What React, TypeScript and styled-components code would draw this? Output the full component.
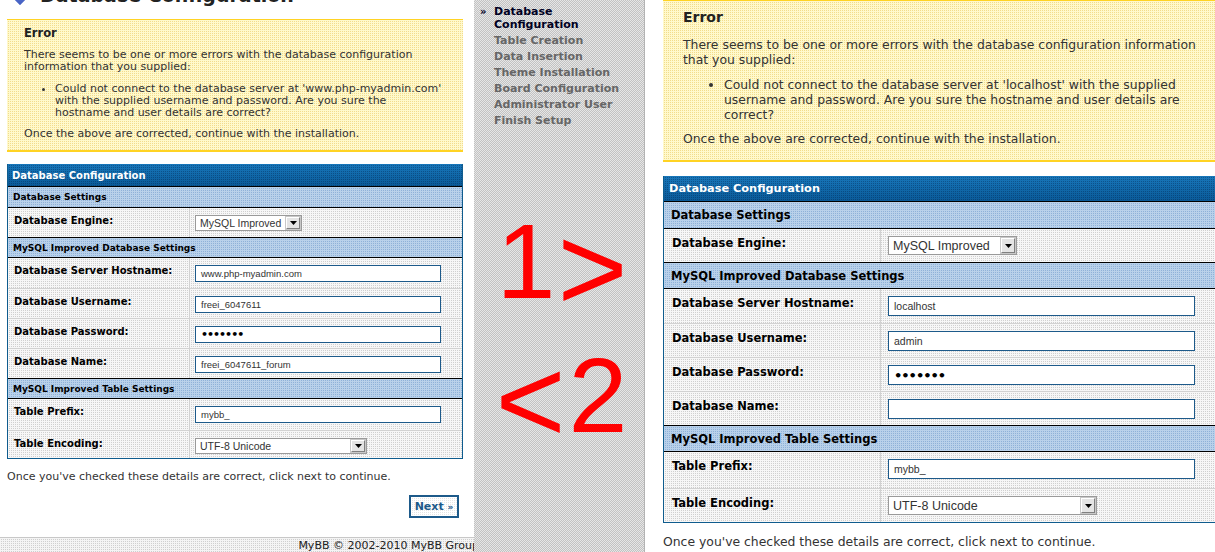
import React from "react";
import styled, { createGlobalStyle, css } from "styled-components";

// --- Sizes : the same installer page, shown at two zoom levels ---
interface Size {
  body: number;
  bodyLH: number;
  title: number;
  titleLH: number;
  errPad: string;
  errTop: number;
  paraGap: number;
  listGap: number;
  onceGap: number;
  indent: number;
  tableTop: number;
  head: number;
  headH: number;
  headPad: number;
  tcat: number;
  tcatH: number;
  tcatPad: number;
  label: number;
  labelLH: number;
  labelW: number;
  labelPadTop: number;
  labelPadLeft: number;
  fieldPadTop: number;
  fieldPadLeft: number;
  rowH: number;
  engineH: number;
  prefixH: number;
  encH: number;
  inputW: number;
  inputH: number;
  inputFont: number;
  dotFont: number;
  selFont: number;
  selH: number;
  engineW: number;
  encW: number;
  arrow: number;
  noteTop: number;
  noteLH: number;
}

const SMALL: Size = {
  body: 11,
  bodyLH: 12,
  title: 11.5,
  titleLH: 14,
  errPad: "6px 19px 10px 17px",
  errTop: 12,
  paraGap: 9,
  listGap: 10,
  onceGap: 9,
  indent: 31,
  tableTop: 12,
  head: 10,
  headH: 23,
  headPad: 4,
  tcat: 9,
  tcatH: 21,
  tcatPad: 5,
  label: 10,
  labelLH: 12,
  labelW: 182,
  labelPadTop: 7,
  labelPadLeft: 6,
  fieldPadTop: 7,
  fieldPadLeft: 5,
  rowH: 30,
  engineH: 29,
  prefixH: 31,
  encH: 28,
  inputW: 246,
  inputH: 17,
  inputFont: 9.5,
  dotFont: 11,
  selFont: 10.5,
  selH: 16,
  engineW: 107,
  encW: 172,
  arrow: 14,
  noteTop: 11,
  noteLH: 14,
};

const LARGE: Size = {
  body: 12.4,
  bodyLH: 15,
  title: 14,
  titleLH: 17,
  errPad: "8px 20px 14px 20px",
  errTop: 0,
  paraGap: 11,
  listGap: 10,
  onceGap: 9,
  indent: 41,
  tableTop: 14,
  head: 11.3,
  headH: 26,
  headPad: 5,
  tcat: 11.5,
  tcatH: 27,
  tcatPad: 7,
  label: 11.5,
  labelLH: 14,
  labelW: 217,
  labelPadTop: 7,
  labelPadLeft: 8,
  fieldPadTop: 7,
  fieldPadLeft: 7,
  rowH: 34,
  engineH: 33,
  prefixH: 36,
  encH: 34,
  inputW: 307,
  inputH: 20,
  inputFont: 10.5,
  dotFont: 13,
  selFont: 12.5,
  selH: 19,
  engineW: 129,
  encW: 209,
  arrow: 14,
  noteTop: 11,
  noteLH: 15,
};

const STEPS = [
  "Database Configuration",
  "Table Creation",
  "Data Insertion",
  "Theme Installation",
  "Board Configuration",
  "Administrator User",
  "Finish Setup",
];

// the old GIF dithering : one darker pixel in every 2x2 cell
const dots = (base: string, dot: string) => css`
  background-color: ${base};
  background-image: conic-gradient(from 90deg at 1px 1px, ${dot} 25%, transparent 0);
  background-size: 2px 2px;
`;

const GlobalStyle = createGlobalStyle`
  html, body { margin: 0; padding: 0; background: #fff; }
  body {
    width: 1215px;
    height: 552px;
    overflow: hidden;
    font-family: "DejaVu Sans", Verdana, sans-serif;
  }
  * { box-sizing: border-box; }
`;

const Arrow = () => (
  <svg width="7" height="4" viewBox="0 0 7 4">
    <path d="M0 0h7L3.5 4z" fill="#000" />
  </svg>
);

interface FormProps {
  s: Size;
  host: string;
  user: string;
  dbName: string;
}

function InstallForm({ s, host, user, dbName }: FormProps) {
  return (
    <>
      <ErrorBox $s={s}>
        <ErrTitle $s={s}>Error</ErrTitle>
        <ErrText $gap={s.paraGap}>
          There seems to be one or more errors with the database configuration information
          that you supplied:
        </ErrText>
        <ErrList $s={s}>
          <li>
            Could not connect to the database server at '{host}' with the supplied username
            and password. Are you sure the hostname and user details are correct?
          </li>
        </ErrList>
        <ErrText $gap={s.onceGap}>Once the above are corrected, continue with the installation.</ErrText>
      </ErrorBox>

      <Table $s={s}>
        <Head $s={s}>Database Configuration</Head>
        <Tcat $s={s}>Database Settings</Tcat>
        <Row $s={s} $h={s.engineH}>
          <Label $s={s}>Database Engine:</Label>
          <Field $s={s}>
            <SelectBox $s={s} $w={s.engineW}>
              MySQL Improved
              <SelectArrow $s={s}>
                <Arrow />
              </SelectArrow>
            </SelectBox>
          </Field>
        </Row>
        <Tcat $s={s}>MySQL Improved Database Settings</Tcat>
        <Row $s={s} $h={s.rowH}>
          <Label $s={s}>Database Server Hostname:</Label>
          <Field $s={s}>
            <TextBox $s={s}>{host}</TextBox>
          </Field>
        </Row>
        <Row $s={s} $h={s.rowH}>
          <Label $s={s}>Database Username:</Label>
          <Field $s={s}>
            <TextBox $s={s}>{user}</TextBox>
          </Field>
        </Row>
        <Row $s={s} $h={s.rowH}>
          <Label $s={s}>Database Password:</Label>
          <Field $s={s}>
            <TextBox $s={s}>
              <Secret $s={s}>•••••••</Secret>
            </TextBox>
          </Field>
        </Row>
        <Row $s={s} $h={s.rowH}>
          <Label $s={s}>Database Name:</Label>
          <Field $s={s}>
            <TextBox $s={s}>{dbName}</TextBox>
          </Field>
        </Row>
        <Tcat $s={s}>MySQL Improved Table Settings</Tcat>
        <Row $s={s} $h={s.prefixH}>
          <Label $s={s}>Table Prefix:</Label>
          <Field $s={s}>
            <TextBox $s={s}>mybb_</TextBox>
          </Field>
        </Row>
        <Row $s={s} $h={s.encH}>
          <Label $s={s}>Table Encoding:</Label>
          <Field $s={s}>
            <SelectBox $s={s} $w={s.encW}>
              UTF-8 Unicode
              <SelectArrow $s={s}>
                <Arrow />
              </SelectArrow>
            </SelectBox>
          </Field>
        </Row>
      </Table>

      <Hint $s={s}>Once you've checked these details are correct, click next to continue.</Hint>
    </>
  );
}

export default function App() {
  return (
    <Page>
      <GlobalStyle />

      {/* 1. Capture de gauche, petite */}
      <LeftPane>
        <LeftContent>
          <PageTitle>
            <svg width="16" height="16" viewBox="0 0 16 16">
              <defs>
                <linearGradient id="gem" x1="0" y1="0" x2="0" y2="1">
                  <stop offset="0" stopColor="#8fb0f0" />
                  <stop offset="1" stopColor="#3553b8" />
                </linearGradient>
              </defs>
              <path d="M8 0L16 8L8 16L0 8z" fill="url(#gem)" />
              <path d="M0 8L16 8L8 16z" fill="#4a64c8" opacity="0.7" />
            </svg>
            Database Configuration
          </PageTitle>
          <InstallForm
            s={SMALL}
            host="www.php-myadmin.com"
            user="freei_6047611"
            dbName="freei_6047611_forum"
          />
          <ButtonRow>
            <NextButton>
              Next <span>»</span>
            </NextButton>
          </ButtonRow>
        </LeftContent>
        <Footer>
          <span>MyBB © 2002-2010 MyBB Group</span>
        </Footer>
      </LeftPane>

      {/* 2. Etapes + annotations rouges */}
      <Sidebar>
        <Steps>
          {STEPS.map((step, i) => (
            <Step key={step} $active={i === 0}>
              <StepMark>{i === 0 ? "»" : ""}</StepMark>
              <span>{step}</span>
            </Step>
          ))}
        </Steps>
        <Notes>
          <NoteLine $pl={16.5}>
            <Glyph $size={106}>1</Glyph>
            <Glyph $size={120} $shift={-12} $gap={2}>
              &gt;
            </Glyph>
          </NoteLine>
          <NoteLine $pl={15.4}>
            <Glyph $size={120} $shift={-10}>
              &lt;
            </Glyph>
            <Glyph $size={106} $gap={3}>
              2
            </Glyph>
          </NoteLine>
        </Notes>
      </Sidebar>

      {/* 3. Capture de droite, zoomée */}
      <RightPane>
        <InstallForm s={LARGE} host="localhost" user="admin" dbName="" />
      </RightPane>
    </Page>
  );
}

// --- CSS ---

const Page = styled.div`
  display: flex;
  width: 1215px;
  height: 552px;
  overflow: hidden;
  background: #fff;
`;

const LeftPane = styled.div`
  width: 474px;
  height: 552px;
  flex: none;
  display: flex;
  flex-direction: column;
  overflow: hidden;
`;

const LeftContent = styled.div`
  display: flex;
  flex-direction: column;
  padding: 0 11px 0 7px;
`;

const PageTitle = styled.h1`
  margin: -17px 0 0 5px;
  display: flex;
  align-items: center;
  gap: 12px;
  font-size: 19px;
  line-height: 24px;
  font-weight: bold;
  color: #222;
  white-space: nowrap;

  svg {
    flex: none;
    margin-top: 3px;
  }
`;

const ErrorBox = styled.div<{ $s: Size }>`
  ${dots("#fff9cc", "#f2dc8c")}
  margin-top: ${(p) => p.$s.errTop}px;
  padding: ${(p) => p.$s.errPad};
  border-top: 1px solid #ffd324;
  border-bottom: 2px solid #ffd324;
  color: #333;
  font-size: ${(p) => p.$s.body}px;
  line-height: ${(p) => p.$s.bodyLH}px;
`;

const ErrTitle = styled.h3<{ $s: Size }>`
  margin: 0;
  font-size: ${(p) => p.$s.title}px;
  line-height: ${(p) => p.$s.titleLH}px;
  font-weight: bold;
  color: #222;
`;

const ErrText = styled.p<{ $gap: number }>`
  margin: ${(p) => p.$gap}px 0 0;
`;

const ErrList = styled.ul<{ $s: Size }>`
  margin: ${(p) => p.$s.listGap}px 0 0;
  padding-left: ${(p) => p.$s.indent}px;
  list-style: disc;
`;

const Table = styled.div<{ $s: Size }>`
  margin-top: ${(p) => p.$s.tableTop}px;
  border: 1px solid #0f5c8e;
  border-top: none;
  display: flex;
  flex-direction: column;
`;

const Head = styled.div<{ $s: Size }>`
  height: ${(p) => p.$s.headH}px;
  display: flex;
  align-items: center;
  padding-left: ${(p) => p.$s.headPad}px;
  background-color: #0d64a4;
  background-image: conic-gradient(from 90deg at 1px 1px, rgba(0, 30, 70, 0.35) 25%, transparent 0),
    linear-gradient(#1877ba, #0a5a98);
  background-size: 2px 2px, 100% 100%;
  border-bottom: 1px solid #000;
  color: #fff;
  font-size: ${(p) => p.$s.head}px;
  font-weight: bold;
  white-space: nowrap;
`;

const Tcat = styled.div<{ $s: Size }>`
  ${dots("#b9d1ea", "#8fb1d8")}
  height: ${(p) => p.$s.tcatH}px;
  display: flex;
  align-items: center;
  padding-left: ${(p) => p.$s.tcatPad}px;
  border-top: 1px solid #000;
  border-bottom: 1px solid #000;
  color: #000;
  font-size: ${(p) => p.$s.tcat}px;
  font-weight: bold;
  white-space: nowrap;

  ${Head} + & {
    border-top: none;
  }
`;

const Row = styled.div<{ $s: Size; $h: number }>`
  ${dots("#f7f7f7", "#d0d0d0")}
  height: ${(p) => p.$h}px;
  display: grid;
  grid-template-columns: ${(p) => p.$s.labelW}px 1fr;
  border-top: 1px solid #d2d2d2;

  ${Tcat} + & {
    border-top: none;
  }
`;

const Label = styled.div<{ $s: Size }>`
  padding: ${(p) => p.$s.labelPadTop}px 0 0 ${(p) => p.$s.labelPadLeft}px;
  border-right: 1px solid #d2d2d2;
  font-size: ${(p) => p.$s.label}px;
  line-height: ${(p) => p.$s.labelLH}px;
  font-weight: bold;
  color: #000;
  white-space: nowrap;
`;

const Field = styled.div<{ $s: Size }>`
  padding: ${(p) => p.$s.fieldPadTop}px 0 0 ${(p) => p.$s.fieldPadLeft}px;
`;

const TextBox = styled.div<{ $s: Size }>`
  width: ${(p) => p.$s.inputW}px;
  height: ${(p) => p.$s.inputH}px;
  display: flex;
  align-items: center;
  padding-left: 5px;
  background: #fff;
  border: 1px solid #1d5a8a;
  font-family: "Liberation Sans", Arial, sans-serif;
  font-size: ${(p) => p.$s.inputFont}px;
  color: #333;
  white-space: nowrap;
`;

const Secret = styled.span<{ $s: Size }>`
  font-family: "DejaVu Sans", sans-serif;
  font-size: ${(p) => p.$s.dotFont}px;
  font-weight: bold;
  letter-spacing: -1px;
  color: #000;
`;

const SelectBox = styled.div<{ $s: Size; $w: number }>`
  width: ${(p) => p.$w}px;
  height: ${(p) => p.$s.selH}px;
  display: flex;
  align-items: center;
  justify-content: space-between;
  padding: 0 1px 0 4px;
  background: #fff;
  border: 1px solid #9a9a9a;
  font-family: "Liberation Sans", Arial, sans-serif;
  font-size: ${(p) => p.$s.selFont}px;
  color: #333;
  white-space: nowrap;
`;

const SelectArrow = styled.span<{ $s: Size }>`
  width: ${(p) => p.$s.arrow}px;
  height: ${(p) => p.$s.selH - 4}px;
  display: flex;
  align-items: center;
  justify-content: center;
  background: #e4e4e4;
  border: 1px solid #808080;
  border-top-color: #fff;
  border-left-color: #fff;
  box-shadow: 0 0 0 1px #c8c8c8;
`;

const Hint = styled.p<{ $s: Size }>`
  margin: ${(p) => p.$s.noteTop}px 0 0;
  font-size: ${(p) => p.$s.body}px;
  line-height: ${(p) => p.$s.noteLH}px;
  color: #333;
  white-space: nowrap;
`;

const ButtonRow = styled.div`
  display: flex;
  justify-content: flex-end;
  margin-top: 11px;
  padding-right: 4px;
`;

const NextButton = styled.button`
  ${dots("#ffffff", "#e6e6e6")}
  width: 50px;
  height: 23px;
  padding: 0;
  border: 2px solid #1d5a8a;
  font-family: "DejaVu Sans", Verdana, sans-serif;
  font-size: 11px;
  font-weight: bold;
  color: #1d5a8a;

  span {
    font-size: 9px;
  }
`;

const Footer = styled.div`
  ${dots("#f4f4f4", "#cfcfcf")}
  margin-top: auto;
  height: 15px;
  flex: none;
  display: flex;
  justify-content: flex-end;
  border-top: 1px solid #c8c8c8;
  font-size: 11px;
  line-height: 16px;
  color: #222;
  white-space: nowrap;

  span {
    margin-right: -5px;
  }
`;

const Sidebar = styled.nav`
  width: 171px;
  height: 552px;
  flex: none;
  padding: 5px 10px 0 6px;
  background: repeating-conic-gradient(#c2c2c2 0 25%, #e6e6e6 0 50%) 0 0 / 2px 2px;
  border-right: 1px solid #b3b3b3;
`;

const Steps = styled.ul`
  list-style: none;
  margin: 0;
  padding: 0;
`;

const Step = styled.li<{ $active: boolean }>`
  display: flex;
  margin-bottom: 3px;
  font-size: 11px;
  line-height: 13px;
  font-weight: bold;
  color: ${(p) => (p.$active ? "#000022" : "#666")};
`;

const StepMark = styled.span`
  width: 14px;
  flex: none;
  font-size: 10px;
`;

const Notes = styled.div`
  margin-top: 81px;
`;

const NoteLine = styled.div<{ $pl: number }>`
  height: 134px;
  padding-left: ${(p) => p.$pl}px;
  font-family: "Liberation Sans", Arial, sans-serif;
  font-size: 106px;
  line-height: 106px;
  color: #ff0000;
  white-space: nowrap;
`;

const Glyph = styled.span<{ $size: number; $shift?: number; $gap?: number }>`
  font-size: ${(p) => p.$size}px;
  vertical-align: ${(p) => p.$shift ?? 0}px;
  margin-left: ${(p) => p.$gap ?? 0}px;
`;

const RightPane = styled.div`
  width: 575px;
  flex: none;
  margin-left: 18px;
  display: flex;
  flex-direction: column;
`;
